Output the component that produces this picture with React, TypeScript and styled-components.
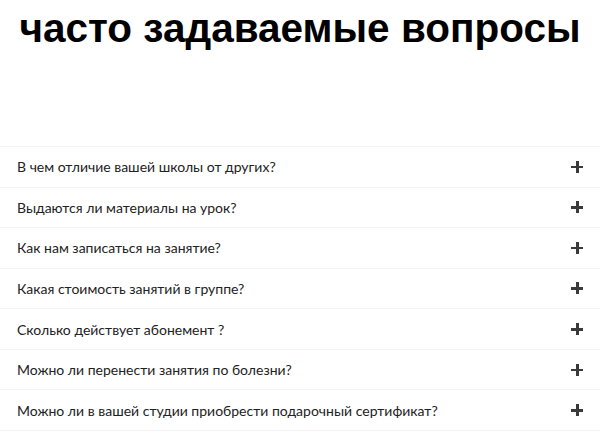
import React from 'react';
import styled, { createGlobalStyle } from 'styled-components';

const GlobalStyle = createGlobalStyle`
  html, body {
    margin: 0;
    padding: 0;
    background: #ffffff;
  }
`;

const Page = styled.div`
  width: 600px;
  overflow: hidden;
`;

const Title = styled.h1`
  margin: 0;
  padding-top: 3px;
  height: 146px;
  box-sizing: border-box;
  font-family: 'Liberation Sans', Arial, sans-serif;
  font-size: 40.5px;
  font-weight: 700;
  line-height: 50px;
  color: #000;
  text-align: center;
  white-space: nowrap;
`;

const List = styled.div`
  border-top: 1px solid #f3f3f3;
`;

const Row = styled.div`
  display: flex;
  align-items: center;
  justify-content: space-between;
  padding: 0 17px;
  height: 40.57px;
  box-sizing: border-box;
  border-bottom: 1px solid #f3f3f3;
`;

const Question = styled.span`
  font-family: Lato, 'Open Sans', sans-serif;
  font-size: 14px;
  color: #222;
`;

const Plus = styled.span`
  position: relative;
  width: 12px;
  height: 12px;
  flex-shrink: 0;

  &::before,
  &::after {
    content: '';
    position: absolute;
    background: #3a3a3a;
  }
  &::before {
    left: 0;
    right: 0;
    top: 5px;
    height: 2.5px;
  }
  &::after {
    top: 0;
    bottom: 0;
    left: 5px;
    width: 2.5px;
  }
`;

const questions = [
  'В чем отличие вашей школы от других?',
  'Выдаются ли материалы на урок?',
  'Как нам записаться на занятие?',
  'Какая стоимость занятий в группе?',
  'Сколько действует абонемент ?',
  'Можно ли перенести занятия по болезни?',
  'Можно ли в вашей студии приобрести подарочный сертификат?',
];

export default function App() {
  return (
    <Page>
      <GlobalStyle />
      <Title>часто задаваемые вопросы</Title>
      <List>
        {questions.map((q, i) => (
          <Row key={i}>
            <Question>{q}</Question>
            <Plus />
          </Row>
        ))}
      </List>
    </Page>
  );
}
